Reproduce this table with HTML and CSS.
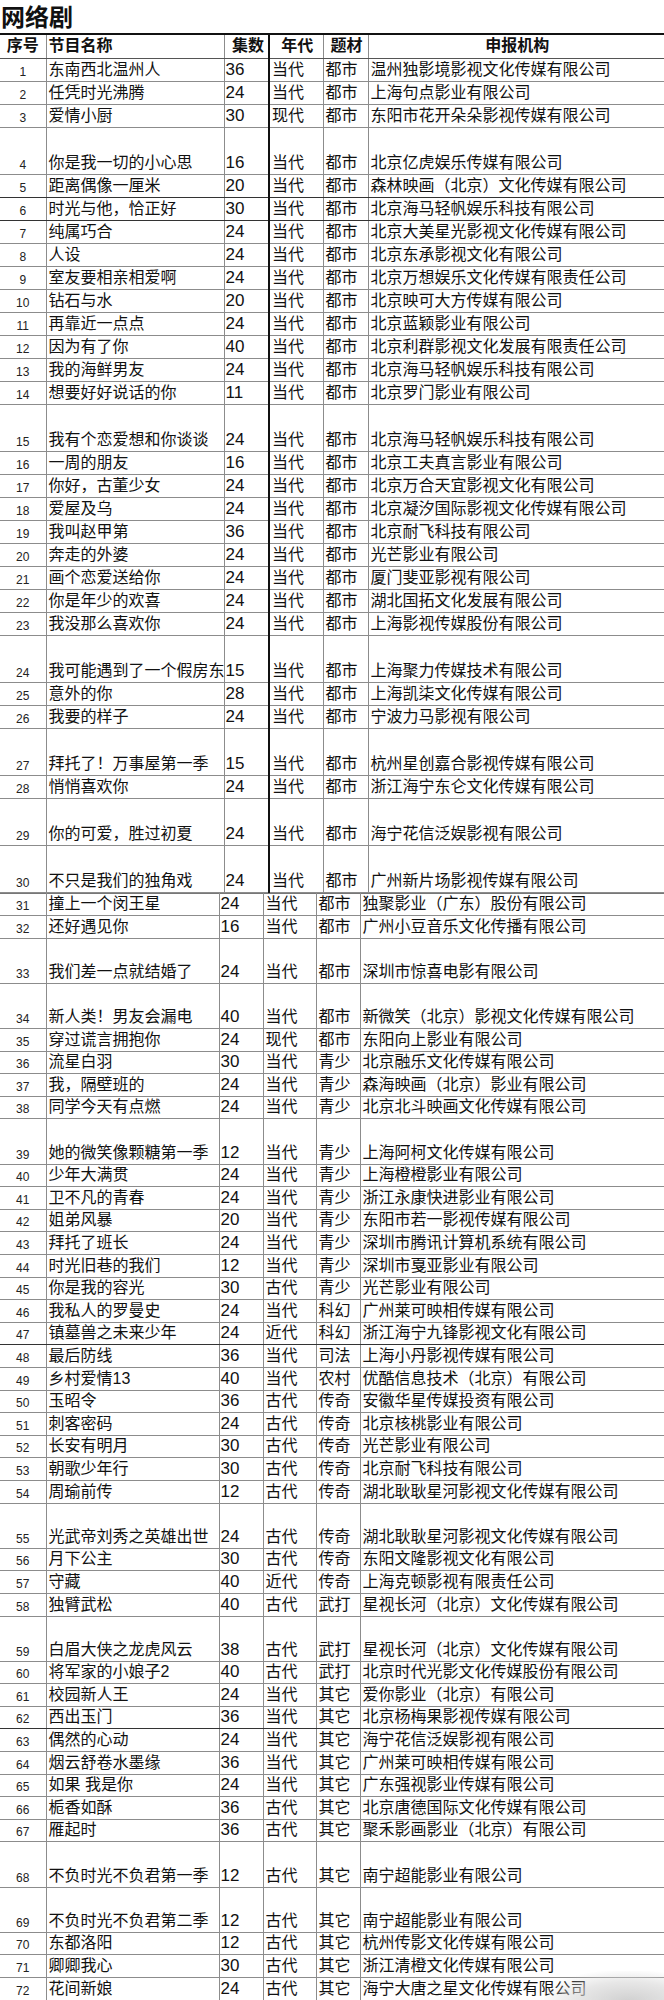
FILE: index.html
```html
<!DOCTYPE html>
<html lang="zh-CN">
<head>
<meta charset="utf-8">
<title>网络剧</title>
<link rel="stylesheet" href="styles.css">
</head>
<body>
<div class="page">
<h1 class="title">网络剧</h1>
<table class="sheet sheet-top">
<colgroup><col class="c-no"><col class="c-name-a"><col class="c-ep-a"><col class="c-era-a"><col class="c-genre-a"><col></colgroup>
<thead>
<tr class="head"><th class="no">序号</th><th class="name">节目名称</th><th class="ep">集数</th><th class="ctr">年代</th><th class="ctr">题材</th><th class="ctr">申报机构</th></tr>
</thead>
<tbody>
<tr><td class="no">1</td><td>东南西北温州人</td><td class="ep">36</td><td>当代</td><td>都市</td><td>温州独影境影视文化传媒有限公司</td></tr>
<tr><td class="no">2</td><td>任凭时光沸腾</td><td class="ep">24</td><td>当代</td><td>都市</td><td>上海句点影业有限公司</td></tr>
<tr><td class="no">3</td><td>爱情小厨</td><td class="ep">30</td><td>现代</td><td>都市</td><td>东阳市花开朵朵影视传媒有限公司</td></tr>
<tr class="tall"><td class="no">4</td><td>你是我一切的小心思</td><td class="ep">16</td><td>当代</td><td>都市</td><td>北京亿虎娱乐传媒有限公司</td></tr>
<tr class="dark"><td class="no">5</td><td>距离偶像一厘米</td><td class="ep">20</td><td>当代</td><td>都市</td><td>森林映画（北京）文化传媒有限公司</td></tr>
<tr class="dark"><td class="no">6</td><td>时光与他，恰正好</td><td class="ep">30</td><td>当代</td><td>都市</td><td>北京海马轻帆娱乐科技有限公司</td></tr>
<tr><td class="no">7</td><td>纯属巧合</td><td class="ep">24</td><td>当代</td><td>都市</td><td>北京大美星光影视文化传媒有限公司</td></tr>
<tr><td class="no">8</td><td>人设</td><td class="ep">24</td><td>当代</td><td>都市</td><td>北京东承影视文化有限公司</td></tr>
<tr><td class="no">9</td><td>室友要相亲相爱啊</td><td class="ep">24</td><td>当代</td><td>都市</td><td>北京万想娱乐文化传媒有限责任公司</td></tr>
<tr><td class="no">10</td><td>钻石与水</td><td class="ep">20</td><td>当代</td><td>都市</td><td>北京映可大方传媒有限公司</td></tr>
<tr><td class="no">11</td><td>再靠近一点点</td><td class="ep">24</td><td>当代</td><td>都市</td><td>北京蓝颖影业有限公司</td></tr>
<tr><td class="no">12</td><td>因为有了你</td><td class="ep">40</td><td>当代</td><td>都市</td><td>北京利群影视文化发展有限责任公司</td></tr>
<tr><td class="no">13</td><td>我的海鲜男友</td><td class="ep">24</td><td>当代</td><td>都市</td><td>北京海马轻帆娱乐科技有限公司</td></tr>
<tr><td class="no">14</td><td>想要好好说话的你</td><td class="ep">11</td><td>当代</td><td>都市</td><td>北京罗门影业有限公司</td></tr>
<tr class="tall"><td class="no">15</td><td>我有个恋爱想和你谈谈</td><td class="ep">24</td><td>当代</td><td>都市</td><td>北京海马轻帆娱乐科技有限公司</td></tr>
<tr><td class="no">16</td><td>一周的朋友</td><td class="ep">16</td><td>当代</td><td>都市</td><td>北京工夫真言影业有限公司</td></tr>
<tr><td class="no">17</td><td>你好，古董少女</td><td class="ep">24</td><td>当代</td><td>都市</td><td>北京万合天宜影视文化有限公司</td></tr>
<tr><td class="no">18</td><td>爱屋及乌</td><td class="ep">24</td><td>当代</td><td>都市</td><td>北京凝汐国际影视文化传媒有限公司</td></tr>
<tr><td class="no">19</td><td>我叫赵甲第</td><td class="ep">36</td><td>当代</td><td>都市</td><td>北京耐飞科技有限公司</td></tr>
<tr><td class="no">20</td><td>奔走的外婆</td><td class="ep">24</td><td>当代</td><td>都市</td><td>光芒影业有限公司</td></tr>
<tr><td class="no">21</td><td>画个恋爱送给你</td><td class="ep">24</td><td>当代</td><td>都市</td><td>厦门斐亚影视有限公司</td></tr>
<tr><td class="no">22</td><td>你是年少的欢喜</td><td class="ep">24</td><td>当代</td><td>都市</td><td>湖北国拓文化发展有限公司</td></tr>
<tr><td class="no">23</td><td>我没那么喜欢你</td><td class="ep">24</td><td>当代</td><td>都市</td><td>上海影视传媒股份有限公司</td></tr>
<tr class="tall"><td class="no">24</td><td>我可能遇到了一个假房东</td><td class="ep">15</td><td>当代</td><td>都市</td><td>上海聚力传媒技术有限公司</td></tr>
<tr><td class="no">25</td><td>意外的你</td><td class="ep">28</td><td>当代</td><td>都市</td><td>上海凯柒文化传媒有限公司</td></tr>
<tr><td class="no">26</td><td>我要的样子</td><td class="ep">24</td><td>当代</td><td>都市</td><td>宁波力马影视有限公司</td></tr>
<tr class="tall"><td class="no">27</td><td>拜托了！万事屋第一季</td><td class="ep">15</td><td>当代</td><td>都市</td><td>杭州星创嘉合影视传媒有限公司</td></tr>
<tr><td class="no">28</td><td>悄悄喜欢你</td><td class="ep">24</td><td>当代</td><td>都市</td><td>浙江海宁东仑文化传媒有限公司</td></tr>
<tr class="tall"><td class="no">29</td><td>你的可爱，胜过初夏</td><td class="ep">24</td><td>当代</td><td>都市</td><td>海宁花信泛娱影视有限公司</td></tr>
<tr class="tall"><td class="no">30</td><td>不只是我们的独角戏</td><td class="ep">24</td><td>当代</td><td>都市</td><td>广州新片场影视传媒有限公司</td></tr>
</tbody>
</table>
<table class="sheet sheet-bottom">
<colgroup><col class="c-no"><col class="c-name-b"><col class="c-ep-b"><col class="c-era-b"><col class="c-genre-b"><col></colgroup>
<tbody>
<tr><td class="no">31</td><td>撞上一个闵王星</td><td class="ep">24</td><td>当代</td><td>都市</td><td>独聚影业（广东）股份有限公司</td></tr>
<tr><td class="no">32</td><td>还好遇见你</td><td class="ep">16</td><td>当代</td><td>都市</td><td>广州小豆音乐文化传播有限公司</td></tr>
<tr class="tall"><td class="no">33</td><td>我们差一点就结婚了</td><td class="ep">24</td><td>当代</td><td>都市</td><td>深圳市惊喜电影有限公司</td></tr>
<tr class="tall"><td class="no">34</td><td>新人类！男友会漏电</td><td class="ep">40</td><td>当代</td><td>都市</td><td>新微笑（北京）影视文化传媒有限公司</td></tr>
<tr><td class="no">35</td><td>穿过谎言拥抱你</td><td class="ep">24</td><td>现代</td><td>都市</td><td>东阳向上影业有限公司</td></tr>
<tr><td class="no">36</td><td>流星白羽</td><td class="ep">30</td><td>当代</td><td>青少</td><td>北京融乐文化传媒有限公司</td></tr>
<tr><td class="no">37</td><td>我，隔壁班的</td><td class="ep">24</td><td>当代</td><td>青少</td><td>森海映画（北京）影业有限公司</td></tr>
<tr><td class="no">38</td><td>同学今天有点燃</td><td class="ep">24</td><td>当代</td><td>青少</td><td>北京北斗映画文化传媒有限公司</td></tr>
<tr class="tall"><td class="no">39</td><td>她的微笑像颗糖第一季</td><td class="ep">12</td><td>当代</td><td>青少</td><td>上海阿柯文化传媒有限公司</td></tr>
<tr><td class="no">40</td><td>少年大满贯</td><td class="ep">24</td><td>当代</td><td>青少</td><td>上海橙橙影业有限公司</td></tr>
<tr><td class="no">41</td><td>卫不凡的青春</td><td class="ep">24</td><td>当代</td><td>青少</td><td>浙江永康快进影业有限公司</td></tr>
<tr><td class="no">42</td><td>姐弟风暴</td><td class="ep">20</td><td>当代</td><td>青少</td><td>东阳市若一影视传媒有限公司</td></tr>
<tr><td class="no">43</td><td>拜托了班长</td><td class="ep">24</td><td>当代</td><td>青少</td><td>深圳市腾讯计算机系统有限公司</td></tr>
<tr><td class="no">44</td><td>时光旧巷的我们</td><td class="ep">12</td><td>当代</td><td>青少</td><td>深圳市戛亚影业有限公司</td></tr>
<tr><td class="no">45</td><td>你是我的容光</td><td class="ep">30</td><td>古代</td><td>青少</td><td>光芒影业有限公司</td></tr>
<tr><td class="no">46</td><td>我私人的罗曼史</td><td class="ep">24</td><td>当代</td><td>科幻</td><td>广州莱可映相传媒有限公司</td></tr>
<tr class="dark"><td class="no">47</td><td>镇墓兽之未来少年</td><td class="ep">24</td><td>近代</td><td>科幻</td><td>浙江海宁九锋影视文化有限公司</td></tr>
<tr><td class="no">48</td><td>最后防线</td><td class="ep">36</td><td>当代</td><td>司法</td><td>上海小丹影视传媒有限公司</td></tr>
<tr><td class="no">49</td><td>乡村爱情13</td><td class="ep">40</td><td>当代</td><td>农村</td><td>优酷信息技术（北京）有限公司</td></tr>
<tr><td class="no">50</td><td>玉昭令</td><td class="ep">36</td><td>古代</td><td>传奇</td><td>安徽华星传媒投资有限公司</td></tr>
<tr><td class="no">51</td><td>刺客密码</td><td class="ep">24</td><td>古代</td><td>传奇</td><td>北京核桃影业有限公司</td></tr>
<tr><td class="no">52</td><td>长安有明月</td><td class="ep">30</td><td>古代</td><td>传奇</td><td>光芒影业有限公司</td></tr>
<tr><td class="no">53</td><td>朝歌少年行</td><td class="ep">30</td><td>古代</td><td>传奇</td><td>北京耐飞科技有限公司</td></tr>
<tr><td class="no">54</td><td>周瑜前传</td><td class="ep">12</td><td>古代</td><td>传奇</td><td>湖北耿耿星河影视文化传媒有限公司</td></tr>
<tr class="tall"><td class="no">55</td><td>光武帝刘秀之英雄出世</td><td class="ep">24</td><td>古代</td><td>传奇</td><td>湖北耿耿星河影视文化传媒有限公司</td></tr>
<tr><td class="no">56</td><td>月下公主</td><td class="ep">30</td><td>古代</td><td>传奇</td><td>东阳文隆影视文化有限公司</td></tr>
<tr><td class="no">57</td><td>守藏</td><td class="ep">40</td><td>近代</td><td>传奇</td><td>上海克顿影视有限责任公司</td></tr>
<tr><td class="no">58</td><td>独臂武松</td><td class="ep">40</td><td>古代</td><td>武打</td><td>星视长河（北京）文化传媒有限公司</td></tr>
<tr class="tall"><td class="no">59</td><td>白眉大侠之龙虎风云</td><td class="ep">38</td><td>古代</td><td>武打</td><td>星视长河（北京）文化传媒有限公司</td></tr>
<tr><td class="no">60</td><td>将军家的小娘子2</td><td class="ep">40</td><td>古代</td><td>武打</td><td>北京时代光影文化传媒股份有限公司</td></tr>
<tr><td class="no">61</td><td>校园新人王</td><td class="ep">24</td><td>当代</td><td>其它</td><td>爱你影业（北京）有限公司</td></tr>
<tr class="dark"><td class="no">62</td><td>西出玉门</td><td class="ep">36</td><td>当代</td><td>其它</td><td>北京杨梅果影视传媒有限公司</td></tr>
<tr><td class="no">63</td><td>偶然的心动</td><td class="ep">24</td><td>当代</td><td>其它</td><td>海宁花信泛娱影视有限公司</td></tr>
<tr><td class="no">64</td><td>烟云舒卷水墨缘</td><td class="ep">36</td><td>当代</td><td>其它</td><td>广州莱可映相传媒有限公司</td></tr>
<tr><td class="no">65</td><td>如果 我是你</td><td class="ep">24</td><td>当代</td><td>其它</td><td>广东强视影业传媒有限公司</td></tr>
<tr><td class="no">66</td><td>栀香如酥</td><td class="ep">36</td><td>古代</td><td>其它</td><td>北京唐德国际文化传媒有限公司</td></tr>
<tr><td class="no">67</td><td>雁起时</td><td class="ep">36</td><td>古代</td><td>其它</td><td>聚禾影画影业（北京）有限公司</td></tr>
<tr class="tall"><td class="no">68</td><td>不负时光不负君第一季</td><td class="ep">12</td><td>古代</td><td>其它</td><td>南宁超能影业有限公司</td></tr>
<tr class="tall"><td class="no">69</td><td>不负时光不负君第二季</td><td class="ep">12</td><td>古代</td><td>其它</td><td>南宁超能影业有限公司</td></tr>
<tr><td class="no">70</td><td>东都洛阳</td><td class="ep">12</td><td>古代</td><td>其它</td><td>杭州传影文化传媒有限公司</td></tr>
<tr><td class="no">71</td><td>卿卿我心</td><td class="ep">30</td><td>古代</td><td>其它</td><td>浙江清橙文化传媒有限公司</td></tr>
<tr><td class="no">72</td><td>花间新娘</td><td class="ep">24</td><td>古代</td><td>其它</td><td>海宁大唐之星文化传媒有限公司</td></tr>
</tbody>
</table>
<div class="watermark"></div>
</div>
</body>
</html>
```

FILE: styles.css
```css
* { box-sizing: border-box; }
html, body { margin: 0; padding: 0; background: #fff; }
body {
  font-family: "Liberation Sans", "Noto Sans CJK SC", sans-serif;
  color: #111;
}
.page {
  position: relative;
  width: 664px;
}
.title {
  margin: 0;
  height: 33px;
  padding: 0 0 0 1px;
  font-size: 24px;
  line-height: 32px;
  font-weight: bold;
  font-family: "Noto Sans CJK SC", sans-serif;
  color: #111;
}
.sheet {
  border-collapse: collapse;
  table-layout: fixed;
  width: 664px;
}
.c-no { width: 46px; }
.c-name-a { width: 178px; }
.c-ep-a { width: 45px; }
.c-era-a { width: 54px; }
.c-genre-a { width: 45px; }
.c-name-b { width: 173px; }
.c-ep-b { width: 44px; }
.c-era-b { width: 53px; }
.c-genre-b { width: 44px; }

.sheet td, .sheet th {
  border: 1px solid #8c8c8c;
  padding: 0 0 2px 2px;
  vertical-align: bottom;
  white-space: nowrap;
  overflow: visible;
  font-size: 16px;
  line-height: 18px;
  text-align: left;
  font-weight: normal;
}
.sheet td:first-child, .sheet th:first-child { border-left: none; }
.sheet td:last-child, .sheet th:last-child { border-right: none; }

.sheet-top tr { height: 23px; }
.sheet-top tr.head { height: 24px; }
.sheet-top tr.tall { height: 47px; }
.sheet-bottom tr { height: 22.6px; }
.sheet-bottom tr.tall { height: 45.2px; }

.sheet-top th {
  border-top: 2px solid #111;
  border-bottom: 1px solid #555;
  font-weight: bold;
  vertical-align: middle;
  padding-bottom: 0;
}
.sheet th.ctr { text-align: center; }
.sheet th.ep { text-align: right; padding-right: 4px; }
.sheet th.no { text-align: center; font-size: 16px; padding-left: 0; }

.sheet-top td:nth-child(3), .sheet-top th:nth-child(3) { border-right: 2px solid #111; }

.sheet tr.dark td { border-bottom: 1px solid #333; }

.sheet td.no {
  font-family: "Liberation Sans Narrow", "Liberation Sans", sans-serif;
  font-size: 12px;
  line-height: 14px;
  text-align: center;
  padding-left: 0;
  padding-bottom: 2px;
  color: #222;
}
.sheet td.ep {
  font-size: 17px;
  padding-left: 1px;
}
.sheet-bottom tr:first-child td { border-top: 1px solid #777; }

.watermark {
  position: absolute;
  right: 0;
  bottom: 0;
  width: 120px;
  height: 30px;
  background: radial-gradient(ellipse at 70% 100%, rgba(200,200,200,0.85) 0%, rgba(215,215,215,0.6) 45%, rgba(255,255,255,0) 75%);
  pointer-events: none;
}
```
